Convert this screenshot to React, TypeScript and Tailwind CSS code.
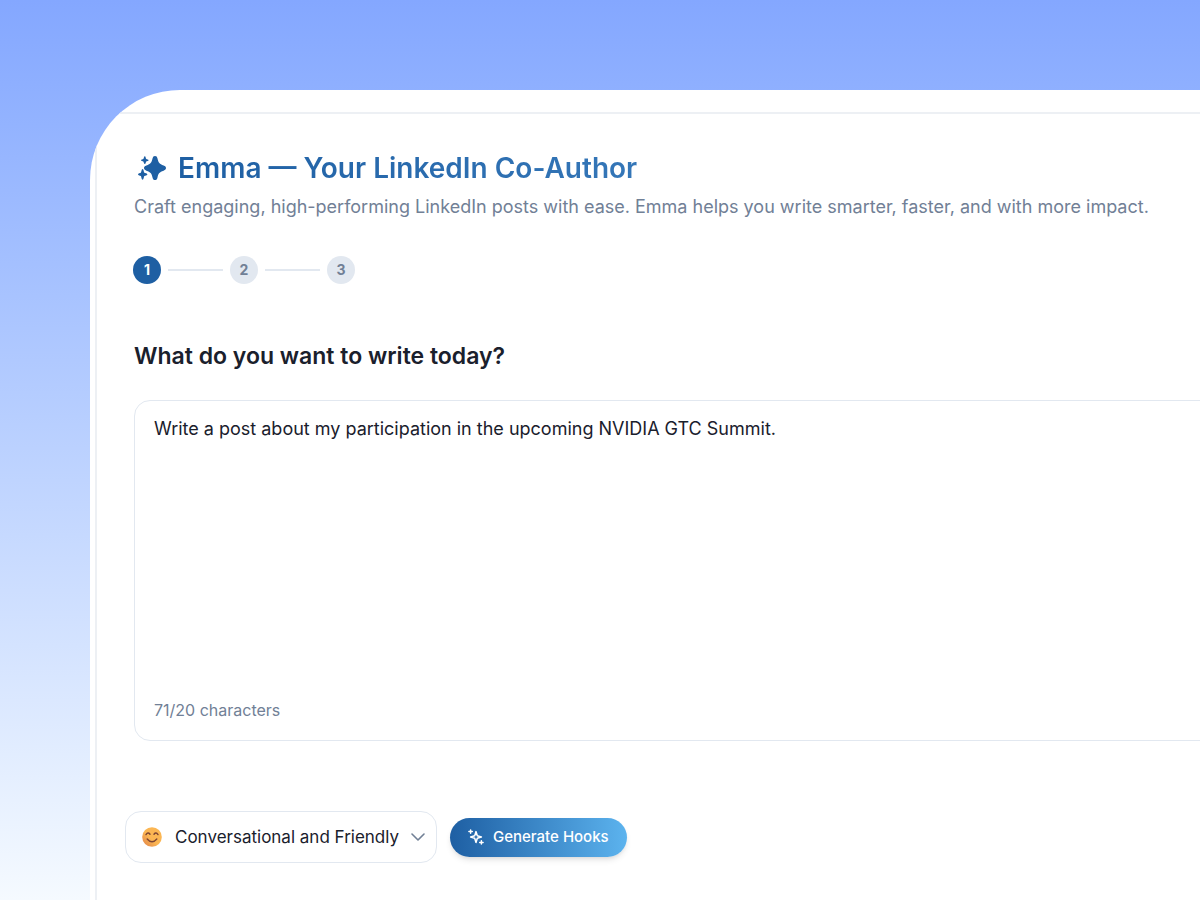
import { useState } from "react";

function SparkleSolid() {
  return (
    <svg viewBox="0 0 28 24" className="h-6 w-7 shrink-0" fill="#1e5fa3" aria-hidden="true">
      <path d="M17 0 C18.5 0 19 .8 19.5 2.6 C20.5 6.9 21.4 8.1 25.6 9.5 C27.3 10.1 28 10.9 28 12.1 C28 13.3 27.3 14.1 25.6 14.7 C21.4 16.1 20.5 17.2 19.5 21.4 C19 23.2 18.5 24 17 24 C15.5 24 15 23.2 14.5 21.4 C13.5 17.2 12.6 16.1 8.4 14.7 C6.8 14.1 6 13.3 6 12.1 C6 10.9 6.8 10.1 8.4 9.5 C12.6 8.1 13.5 6.9 14.5 2.6 C15 .8 15.5 0 17 0Z" />
      <path d="M6.8 .2 C7.7 .2 7.8 2.5 8.3 3 C8.8 3.4 10.6 3.4 10.6 4.2 C10.6 5 8.8 5 8.3 5.5 C7.8 6 7.7 8 6.8 8 C5.9 8 5.8 6 5.3 5.5 C4.8 5 3 5 3 4.2 C3 3.4 4.8 3.4 5.3 3 C5.8 2.5 5.9 .2 6.8 .2Z" />
      <path d="M4.6 13 C5.7 13 5.8 16.2 6.4 16.8 C7 17.3 9.4 17.4 9.4 18.4 C9.4 19.4 7 19.5 6.4 20.1 C5.8 20.7 5.7 23.8 4.6 23.8 C3.5 23.8 3.4 20.7 2.8 20.1 C2.2 19.5 0 19.4 0 18.4 C0 17.4 2.2 17.3 2.8 16.8 C3.4 16.2 3.5 13 4.6 13Z" />
    </svg>
  );
}

function SparkleOutline() {
  return (
    <svg viewBox="0 0 16 16" className="size-4 shrink-0" fill="none" stroke="white" strokeWidth="1.5" strokeLinecap="round" strokeLinejoin="round" aria-hidden="true">
      <path d="M8 2.6 L9.3 6.7 L13.4 8 L9.3 9.3 L8 13.4 L6.7 9.3 L2.6 8 L6.7 6.7Z" />
      <path d="M2.6 .9 V4.3 M.9 2.6 H4.3 M13.4 11.7 V15.1 M11.7 13.4 H15.1" />
    </svg>
  );
}

function SmilingFace() {
  return (
    <svg viewBox="0 0 20 20" className="size-5" aria-hidden="true">
      <defs>
        <linearGradient id="face" x1="1" y1="0" x2="0" y2="1">
          <stop offset="0.55" stopColor="#fbb653" />
          <stop offset="0.85" stopColor="#e8914c" />
        </linearGradient>
      </defs>
      <circle cx="10" cy="10" r="9.8" fill="url(#face)" />
      <g fill="none" stroke="#7d4533" strokeWidth="1.4" strokeLinecap="round">
        <path d="M4 7.6 Q6 4.6 8 7.2" />
        <path d="M12 7.2 Q14 4.6 16 7.6" />
        <path d="M5.2 12 Q10 17.6 14.8 12" />
      </g>
    </svg>
  );
}

function Step({ n, active }: { n: number; active?: boolean }) {
  return (
    <li
      aria-current={active ? "step" : undefined}
      className={
        "flex size-7 items-center justify-center rounded-full text-sm font-bold " +
        (active ? "bg-[#1e5fa3] text-white" : "bg-[#e2e8f0] text-[#718096]")
      }
    >
      {n}
    </li>
  );
}

function Connector() {
  return <li aria-hidden="true" className="h-0.5 w-[55px] bg-[#e2e8f0]" />;
}

export default function App() {
  const [text, setText] = useState("Write a post about my participation in the upcoming NVIDIA GTC Summit. ");

  return (
    <div className="flex min-h-screen flex-col overflow-hidden bg-linear-to-b from-[#84a7ff] to-[#f5faff] pt-[90px] pl-[90px] font-['Inter',sans-serif] text-[#1a202c]">
      <div className="flex flex-1 flex-col overflow-hidden rounded-tl-[90px] bg-white pt-[22px] pl-[5px]">
        <main className="flex-1 border-t-2 border-l-2 border-[#edf0f4] pt-[34px] pl-8">
          <header className="pl-[5px]">
            <h1 className="flex items-center gap-3 pl-1 text-[28px] leading-10 font-semibold">
              <SparkleSolid />
              <span className="flex-1 bg-linear-to-r from-[#1e5fa3] to-[#4f94d2] bg-clip-text text-transparent">
                Emma — Your LinkedIn Co-Author
              </span>
            </h1>
            <p className="text-lg leading-[38px] text-[#718096]">
              Craft engaging, high-performing LinkedIn posts with ease. Emma helps you write smarter, faster, and with more impact.
            </p>
          </header>

          <ol className="mt-[30px] flex items-center gap-[7px] pl-1">
            <Step n={1} active />
            <Connector />
            <Step n={2} />
            <Connector />
            <Step n={3} />
          </ol>

          <section className="mt-14 pl-[5px]">
            <h2 className="text-[23px] leading-8 font-semibold">
              <label htmlFor="prompt">What do you want to write today?</label>
            </h2>
            <div className="mt-7 -mr-4 flex h-[341px] flex-col rounded-2xl border border-[#e2e8f0] px-[19px] pt-3 pb-4">
              <textarea
                id="prompt"
                value={text}
                onChange={(e) => setText(e.target.value)}
                className="block w-full flex-1 resize-none text-lg leading-8 outline-none"
              />
              <p className="text-base leading-7 text-[#718096]">{text.length}/20 characters</p>
            </div>
          </section>

          <div className="mt-[70px] -ml-1 flex items-center gap-[13px]">
            <div className="relative">
              <span className="pointer-events-none absolute inset-y-0 left-[17px] flex items-center">
                <SmilingFace />
              </span>
              <select
                aria-label="Tone"
                className="block h-[52px] w-[312px] appearance-none rounded-2xl border border-[#e2e8f0] bg-white pt-0.5 pr-8 pl-[49px] text-[17px]"
              >
                <option>Conversational and Friendly</option>
              </select>
              <svg viewBox="0 0 14 8" className="pointer-events-none absolute inset-y-0 right-3 my-auto h-2 w-3.5" fill="none" stroke="#718096" strokeWidth="1.6" strokeLinecap="round" strokeLinejoin="round" aria-hidden="true">
                <path d="M1 1 L7 7 L13 1" />
              </svg>
            </div>
            <button
              type="button"
              className="flex h-[39px] items-center gap-[9px] rounded-full bg-linear-to-r from-[#1e5fa3] to-[#5cb3ee] px-[18px] text-[15px] font-medium text-white shadow-md"
            >
              <SparkleOutline />
              Generate Hooks
            </button>
          </div>
        </main>
      </div>
    </div>
  );
}
